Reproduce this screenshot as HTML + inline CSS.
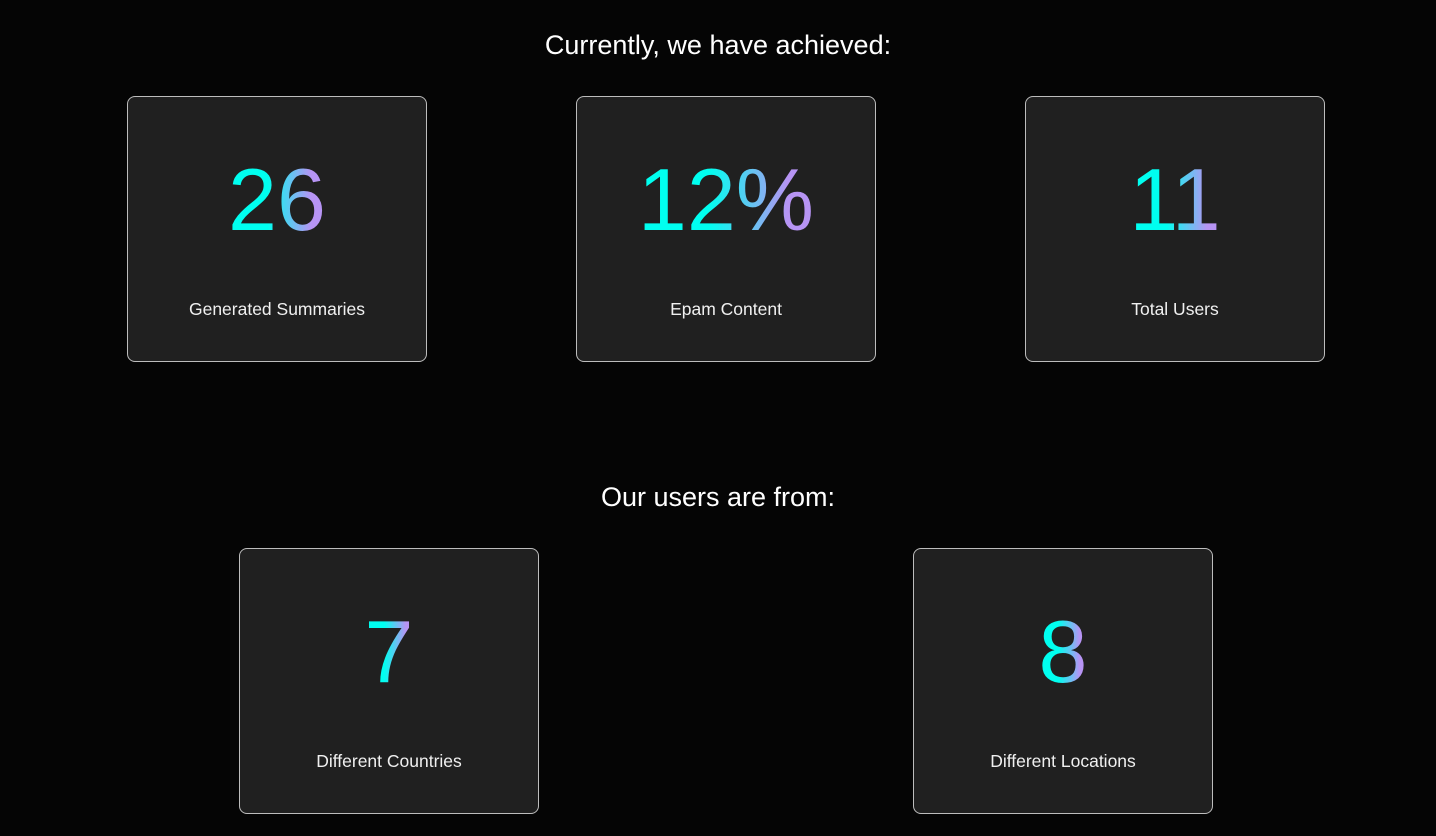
<!DOCTYPE html>
<html><head><meta charset="utf-8"><style>
html,body{margin:0;padding:0;background:#050505;width:1436px;height:836px;overflow:hidden;font-family:"Liberation Sans",sans-serif;}
.t{position:absolute;left:0;width:1436px;text-align:center;color:#fff;font-size:27px;line-height:30px;}
.c{position:absolute;width:298px;height:264px;border:1px solid #bdbdbd;border-radius:8px;background:#202020;}
.n{position:absolute;top:53px;left:0;width:100%;text-align:center;font-size:88px;line-height:100px;}
.n span{background:linear-gradient(90deg,#00fff0 0%,#00fff0 40%,#b794f4 85%,#b794f4 100%);-webkit-background-clip:text;background-clip:text;color:transparent;}
.l{position:absolute;top:201px;left:0;width:100%;text-align:center;color:#f0f0f0;font-size:17.5px;line-height:22px;}
</style></head><body>
<div class="t" style="top:30px">Currently, we have achieved:</div>
<div class="c" style="left:127px;top:96px"><div class="n"><span>26</span></div><div class="l">Generated Summaries</div></div>
<div class="c" style="left:576px;top:96px"><div class="n"><span>12%</span></div><div class="l">Epam Content</div></div>
<div class="c" style="left:1025px;top:96px"><div class="n"><span>11</span></div><div class="l">Total Users</div></div>
<div class="t" style="top:482px">Our users are from:</div>
<div class="c" style="left:239px;top:548px"><div class="n"><span>7</span></div><div class="l">Different Countries</div></div>
<div class="c" style="left:913px;top:548px"><div class="n"><span>8</span></div><div class="l">Different Locations</div></div>
</body></html>
